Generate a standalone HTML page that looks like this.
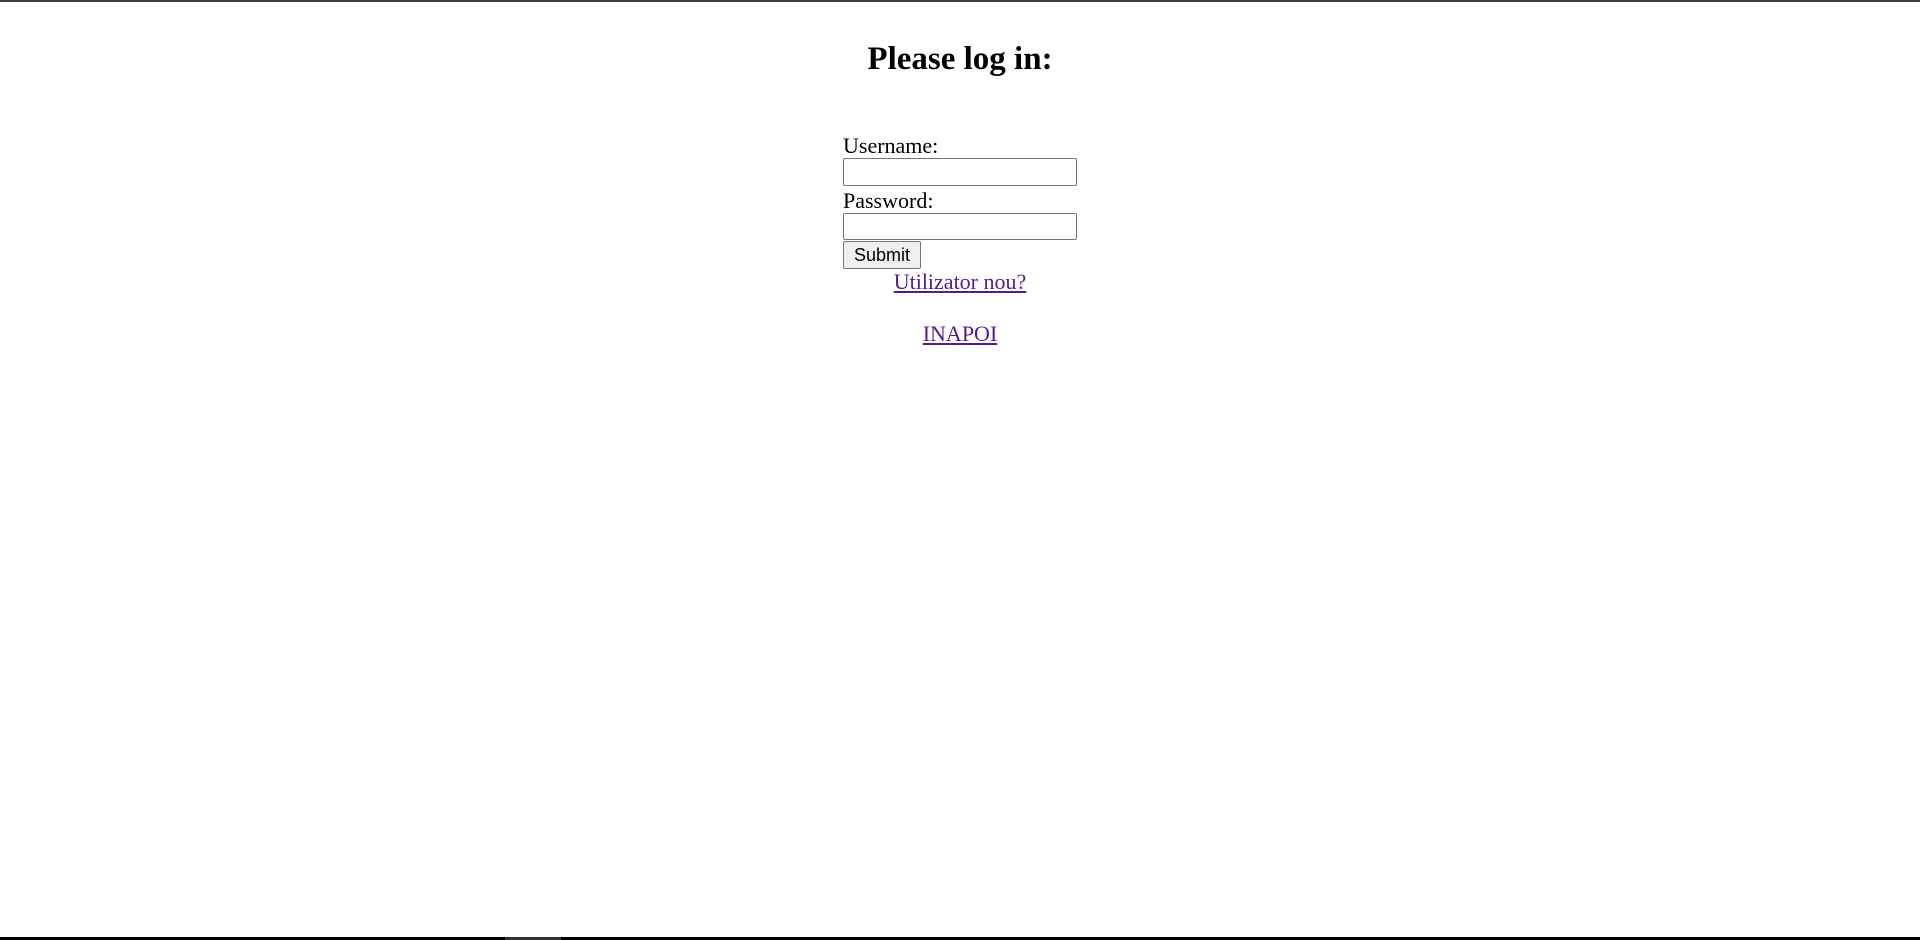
<!DOCTYPE html>
<html><head><meta charset="utf-8"><style>
html,body{margin:0;padding:0;width:1920px;height:940px;overflow:hidden;background:#fff;position:relative;font-family:"Liberation Serif",serif;}
.a{position:absolute;white-space:nowrap;}
.t{font-size:22px;line-height:25px;color:#000;}
h2{position:absolute;margin:0;left:0;width:1920px;text-align:center;top:40px;font-size:33px;line-height:38px;font-weight:bold;}
.in{position:absolute;left:843px;width:234px;box-sizing:border-box;border:1px solid #767676;border-radius:2px;background:#fff;}
.btn{position:absolute;left:843px;top:241px;width:78px;height:28px;box-sizing:border-box;border:1px solid #767676;border-radius:2px;background:#efefef;font-family:"Liberation Sans",sans-serif;font-size:18px;line-height:26px;text-align:center;color:#000;}
a{color:#551a8b;text-decoration:underline;}
.c{left:0;width:1920px;text-align:center;}
</style></head><body>
<div style="position:absolute;left:0;top:0;width:1920px;height:2px;background:#3a3a3a"></div>
<h2>Please log in:</h2>
<div class="a t" style="left:843px;top:133px">Username:</div>
<div class="in" style="top:158px;height:28px"></div>
<div class="a t" style="left:843px;top:188px">Password:</div>
<div class="in" style="top:213px;height:27px"></div>
<div class="btn">Submit</div>
<div class="a t c" style="top:269px"><a>Utilizator nou?</a></div>
<div class="a t c" style="top:321px"><a>INAPOI</a></div>
<div style="position:absolute;left:0;top:937px;width:1920px;height:3px;background:#000"></div>
<div style="position:absolute;left:505px;top:937px;width:56px;height:3px;background:#333"></div>
</body></html>
